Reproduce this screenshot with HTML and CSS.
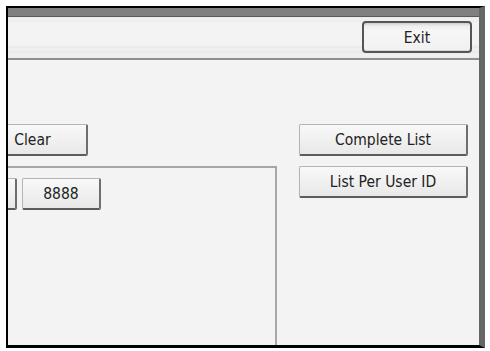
FILE: index.html
```html
<!DOCTYPE html>
<html>
<head>
<meta charset="utf-8">
<link rel="stylesheet" href="styles.css">
</head>
<body>
<div class="screen">
  <div class="topbar"></div>
  <div class="header">
    <button class="btn exit">Exit</button>
  </div>
  <div class="content">
    <div class="left">
      <div class="clear-row"><button class="btn clear">Clear</button></div>
      <div class="box">
        <div class="keys">
          <button class="btn key"></button>
          <button class="btn key">8888</button>
        </div>
      </div>
    </div>
    <div class="right">
      <button class="btn wide">Complete List</button>
      <button class="btn wide">List Per User ID</button>
    </div>
  </div>
</div>
</body>
</html>
```
FILE: styles.css
```css
html, body {
  margin: 0;
  padding: 0;
  background: #ffffff;
}

.screen {
  margin: 6px 0 0 6px;
  width: 479px;
  height: 342px;
  box-sizing: border-box;
  border-left: 2px solid #000;
  border-top: 2px solid #000;
  border-bottom: 3px solid #000;
  border-right: 6px solid #666;
  display: flex;
  flex-direction: column;
  font-family: "DejaVu Sans Condensed", "DejaVu Sans", sans-serif;
  font-stretch: condensed;
}

.topbar {
  height: 8px;
  flex: none;
  background: #808080;
  border-bottom: 1px solid #5a5a5a;
}

.header {
  flex: none;
  box-sizing: border-box;
  border-bottom: 2px solid #8f8f8f;
  background: linear-gradient(to bottom,
    #e9e9e9 0px, #f2f2f2 2px, #ececec 4px, #f3f3f3 6px,
    #f3f3f3 28px, #e8e8e8 30px, #f2f2f2 32px, #e9e9e9 35px, #f1f1f1 38px, #ececec 41px);
  display: flex;
  justify-content: flex-end;
  align-items: flex-start;
  padding: 4px 7px 0 0;
  height: 43px;
}

.btn {
  box-sizing: border-box;
  height: 32px;
  margin: 0;
  padding: 1px 0 0 0;
  font-family: "DejaVu Sans Condensed", "DejaVu Sans", sans-serif;
  font-stretch: condensed;
  font-weight: 200;
  font-size: 15.5px;
  color: #222;
  background: linear-gradient(to bottom, #f8f8f8, #efefef 60%, #e8e8e8);
  border-style: solid;
  border-width: 1px 2px 2px 1px;
  border-color: #b4b4b4 #6e6e6e #5c5c5c #b4b4b4;
  border-radius: 2px;
  text-align: center;
  line-height: 28px;
  flex: none;
}

.exit {
  width: 110px;
  border: 2px solid #555;
  border-radius: 4px;
  background: linear-gradient(to bottom, #cfcfcf 0px, #eeeeee 3px, #f6f6f6 8px, #f1f1f1 100%);
  box-shadow: inset 0 -1px 0 #d8d8d8;
}

.content {
  flex: 1;
  display: flex;
  gap: 22px;
  padding: 64px 11px 0 0;
  background: #f3f3f3;
  min-height: 0;
}

.left {
  width: 269px;
  flex: none;
  overflow: hidden;
  display: flex;
  flex-direction: column;
}

.clear-row {
  display: flex;
}

.clear {
  width: 110px;
  margin-left: -30px;
}

.box {
  flex: 1;
  margin-top: 10px;
  margin-left: -10px;
  border-top: 2px solid #a6a6a6;
  border-right: 2px solid #a6a6a6;
  padding-top: 10px;
}

.keys {
  display: flex;
  gap: 5px;
  margin-left: -60px;
}

.key {
  width: 79px;
}

.right {
  width: 169px;
  flex: none;
  margin-left: auto;
  display: flex;
  flex-direction: column;
  gap: 10px;
}

.wide {
  width: 169px;
}
```
